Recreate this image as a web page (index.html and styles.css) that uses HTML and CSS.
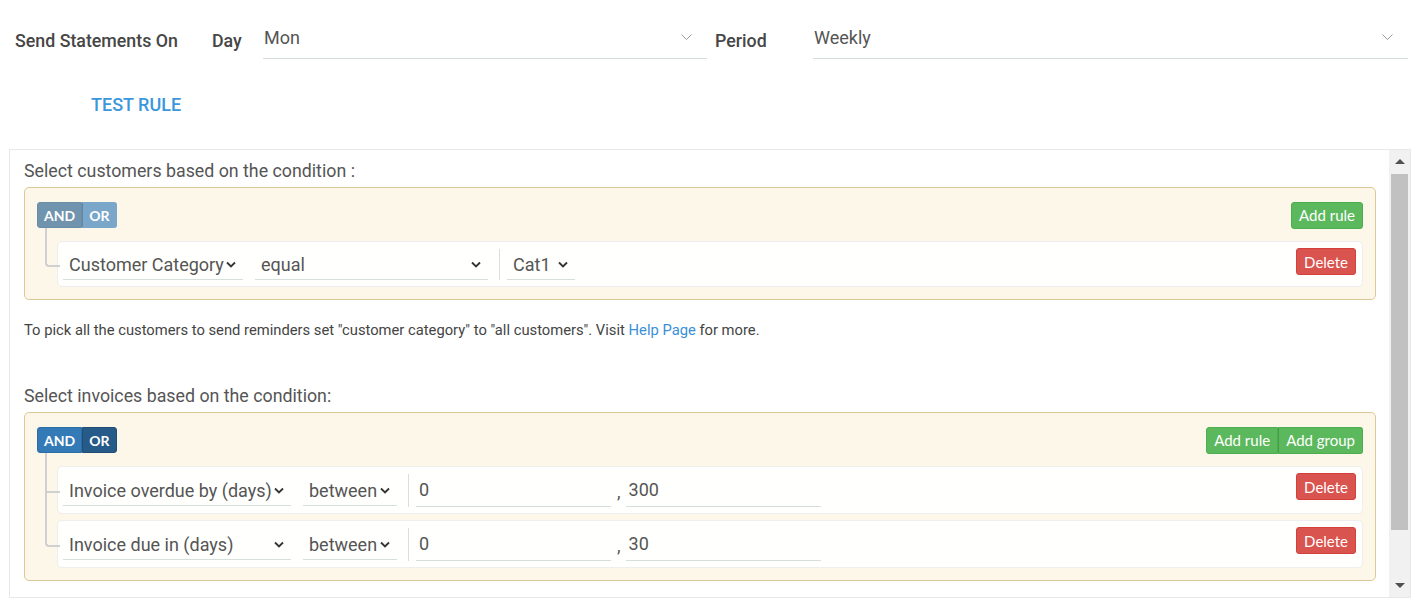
FILE: index.html
```html
<!DOCTYPE html>
<html>
<head>
<meta charset="utf-8">
<link rel="stylesheet" href="styles.css">
</head>
<body>
<div class="page">
  <div class="schedule">
    <span class="lbl lbl-main">Send Statements On</span>
    <span class="lbl lbl-day">Day</span>
    <div class="field field-day"><span>Mon</span><svg class="thin-chev" width="11" height="6" viewBox="0 0 11 6"><polyline points="0.5,0.5 5.5,5.5 10.5,0.5" fill="none" stroke="#999" stroke-width="1"/></svg></div>
    <span class="lbl lbl-period">Period</span>
    <div class="field field-period"><span>Weekly</span><svg class="thin-chev" width="11" height="6" viewBox="0 0 11 6"><polyline points="0.5,0.5 5.5,5.5 10.5,0.5" fill="none" stroke="#999" stroke-width="1"/></svg></div>
  </div>
  <div class="actions"><a class="test-rule">TEST RULE</a></div>
  <div class="panel">
    <div class="panel-body">
      <h3 class="cond-title">Select customers based on the condition :</h3>
      <div class="group">
        <div class="group-header">
          <div class="btn-group">
            <span class="btn cond cond-dis-active">AND</span><span class="btn cond cond-dis">OR</span>
          </div>
          <div class="btn-group">
            <span class="btn btn-green">Add rule</span>
          </div>
        </div>
        <ul class="rules-list">
          <li class="rule">
            <div class="qsel w-cat"><span>Customer Category</span><svg width="10" height="7" viewBox="0 0 10 7"><polyline points="1,1.5 5,5.5 9,1.5" fill="none" stroke="#333" stroke-width="1.8"/></svg></div>
            <div class="qsel w-equal"><span>equal</span><svg width="10" height="7" viewBox="0 0 10 7"><polyline points="1,1.5 5,5.5 9,1.5" fill="none" stroke="#333" stroke-width="1.8"/></svg></div>
            <div class="value">
              <div class="qsel w-cat1"><span>Cat1</span><svg width="10" height="7" viewBox="0 0 10 7"><polyline points="1,1.5 5,5.5 9,1.5" fill="none" stroke="#333" stroke-width="1.8"/></svg></div>
            </div>
            <span class="btn btn-red">Delete</span>
          </li>
        </ul>
      </div>
      <p class="help">To pick all the customers to send reminders set "customer category" to "all customers". Visit <a class="link">Help Page</a> for more.</p>
      <h3 class="cond-title second">Select invoices based on the condition:</h3>
      <div class="group">
        <div class="group-header">
          <div class="btn-group">
            <span class="btn cond cond-and">AND</span><span class="btn cond cond-or">OR</span>
          </div>
          <div class="btn-group">
            <span class="btn btn-green">Add rule</span><span class="btn btn-green">Add group</span>
          </div>
        </div>
        <ul class="rules-list">
          <li class="rule tall">
            <div class="qsel w-inv"><span>Invoice overdue by (days)</span><svg width="10" height="7" viewBox="0 0 10 7"><polyline points="1,1.5 5,5.5 9,1.5" fill="none" stroke="#333" stroke-width="1.8"/></svg></div>
            <div class="qsel w-between"><span>between</span><svg width="10" height="7" viewBox="0 0 10 7"><polyline points="1,1.5 5,5.5 9,1.5" fill="none" stroke="#333" stroke-width="1.8"/></svg></div>
            <div class="value">
              <div class="qinput">0</div><span class="comma">,</span><div class="qinput">300</div>
            </div>
            <span class="btn btn-red">Delete</span>
          </li>
          <li class="rule tall">
            <div class="qsel w-inv"><span>Invoice due in (days)</span><svg width="10" height="7" viewBox="0 0 10 7"><polyline points="1,1.5 5,5.5 9,1.5" fill="none" stroke="#333" stroke-width="1.8"/></svg></div>
            <div class="qsel w-between"><span>between</span><svg width="10" height="7" viewBox="0 0 10 7"><polyline points="1,1.5 5,5.5 9,1.5" fill="none" stroke="#333" stroke-width="1.8"/></svg></div>
            <div class="value">
              <div class="qinput">0</div><span class="comma">,</span><div class="qinput">30</div>
            </div>
            <span class="btn btn-red">Delete</span>
          </li>
        </ul>
      </div>
    </div>
    <div class="scrollbar">
      <div class="sb-btn"><span class="tri-up"></span></div>
      <div class="sb-track"><div class="sb-thumb"></div></div>
      <div class="sb-btn"><span class="tri-down"></span></div>
    </div>
  </div>
</div>
</body>
</html>
```

FILE: styles.css
```css
* { box-sizing: border-box; }
html, body { margin: 0; padding: 0; background: #fff; }
body {
  font-family: Roboto, "Liberation Sans", sans-serif;
  color: #444;
}
.page { padding: 21px 11px 0 9px; }

/* schedule row */
.schedule {
  display: flex;
  align-items: center;
  height: 38px;
  padding: 0 3px 0 6px;
}
.lbl { font-size: 17.8px; font-weight: 500; color: #464646; }
.lbl-main { width: 197px; }
.lbl-day { width: 51px; }
.lbl-period { width: 98px; margin-left: 8px; }
.field {
  display: flex;
  align-items: center;
  justify-content: space-between;
  height: 38px;
  padding: 0 15px 4px 1px;
  border-bottom: 1px solid #d4dfdd;
  font-size: 18px;
  color: #555;
}
.field-day { width: 444px; }
.field-period { flex: 1; }
.thin-chev { margin-top: -1px; }

.actions { padding: 36px 0 0 82px; height: 90px; }
.test-rule {
  display: inline-block;
  font-size: 18px;
  line-height: 20px;
  font-weight: 500;
  color: #3a97dc;
}

/* panel */
.panel {
  display: flex;
  height: 449px;
  border: 1px solid #e8e8e8;
  overflow: hidden;
}
.panel-body {
  flex: 1;
  min-width: 0;
  padding: 9px 13px 0 14px;
}
.cond-title {
  margin: 0 0 4px 0;
  font-size: 17.8px;
  line-height: 24px;
  font-weight: 400;
  color: #555;
}
.cond-title.second { margin-top: 44px; }
.help {
  margin: 20px 0 0 0;
  font-size: 14.75px;
  line-height: 20px;
  color: #444;
}
.link { color: #3b8fd8; }

/* query builder group */
.group {
  border: 1px solid #dcc896;
  border-radius: 5px;
  background: rgba(250, 240, 210, 0.5);
  padding: 14px 12px 12px 12px;
}
.group-header {
  display: flex;
  justify-content: space-between;
  align-items: center;
  height: 26px;
}
.btn-group { display: flex; }
.btn {
  display: inline-flex;
  align-items: center;
  height: 27px;
  padding: 0 7px;
  font-family: Lato, "Open Sans", sans-serif;
  font-size: 15px;
  color: #fff;
  border: 1px solid transparent;
  border-radius: 3px;
}
.btn-group .btn + .btn { border-top-left-radius: 0; border-bottom-left-radius: 0; }
.btn-group .btn:not(:last-child) { border-top-right-radius: 0; border-bottom-right-radius: 0; }
.cond { height: 26px; padding: 0 6px; font-size: 14px; font-weight: 700; }
.cond-dis-active { background: #7194ae; border-color: #6a8ca6; }
.cond-dis { background: #7aa6c9; border-color: #7aa6c9; border-left-color: #5f87a5; }
.cond-and { background: #337ab7; border-color: #2e6da4; }
.cond-or { background: #265a88; border-color: #204d74; }
.btn-green { background: #5cb85c; border-color: #4cae4c; }
.btn-group .btn-green + .btn-green { border-left-color: #449d44; }
.btn-red { background: #d9534f; border-color: #d43f3a; margin-left: auto; align-self: flex-start; margin-top: 1px; }

/* rules */
.rules-list {
  list-style: none;
  margin: 13px 0 0 0;
  padding: 0 0 0 20px;
  display: flex;
  flex-direction: column;
  gap: 6px;
}
.rule {
  position: relative;
  display: flex;
  align-items: center;
  height: 46px;
  padding: 5px 6px 5px 5px;
  border: 1px solid #eee;
  border-radius: 5px;
  background: rgba(255, 255, 255, 0.9);
}
.rule.tall { height: 48px; }
.rule::before, .rule::after {
  content: '';
  position: absolute;
  left: -13px;
  width: 13px;
  border-color: #d0d0d0;
  border-style: solid;
}
.rule::before {
  top: -7px;
  height: calc(50% + 8px);
  border-width: 0 0 2px 2px;
}
.rule:first-child::before {
  top: -14px;
  height: calc(50% + 15px);
}
.rule::after {
  top: 50%;
  height: calc(50% + 7px);
  border-width: 0 0 0 2px;
}
.rule:last-child::before { border-radius: 0 0 0 4px; }
.rule:last-child::after { display: none; }

.qsel {
  display: flex;
  align-items: center;
  justify-content: space-between;
  height: 31px;
  margin-right: 12px;
  padding: 1px 7px 0 6px;
  border-bottom: 1px solid #d5dfdc;
  font-size: 18px;
  color: #555;
}
.w-cat { width: 180px; }
.w-equal { width: 233px; margin-right: 0; }
.w-cat1 { width: 68px; margin-right: 0; }
.w-inv { width: 228px; }
.w-between { width: 94px; margin-right: 0; }
.value {
  display: flex;
  align-items: center;
  margin-left: 11px;
  padding-left: 7px;
  border-left: 1px solid #ddd;
  height: 31px;
}
.rule.tall .value { height: 33px; }
.qinput {
  width: 195px;
  height: 34px;
  display: flex;
  align-items: center;
  padding: 0 3px;
  border-bottom: 1px solid #d5dfdc;
  font-size: 18px;
  color: #555;
}
.comma { font-size: 18px; color: #555; margin: 2px 5px 0 6px; }

/* scrollbar */
.scrollbar {
  width: 21px;
  display: flex;
  flex-direction: column;
  background: #f1f1f1;
}
.sb-btn {
  height: 23px;
  display: flex;
  align-items: center;
  justify-content: center;
}
.sb-track { flex: 1; padding: 1px 2px 0 2px; }
.sb-thumb { height: 356px; background: #c1c1c1; }
.tri-up {
  width: 0; height: 0;
  border-left: 5px solid transparent;
  border-right: 5px solid transparent;
  border-bottom: 5px solid #505050;
}
.tri-down {
  width: 0; height: 0;
  border-left: 5px solid transparent;
  border-right: 5px solid transparent;
  border-top: 5px solid #505050;
}
```
